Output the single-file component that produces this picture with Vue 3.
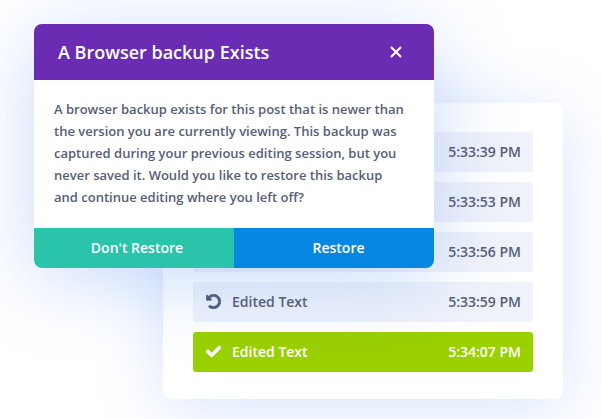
<script setup>
const rows = [
  { time: '5:33:39 PM' },
  { time: '5:33:53 PM' },
  { time: '5:33:56 PM' },
  { time: '5:33:59 PM', label: 'Edited Text', icon: 'undo' },
  { time: '5:34:07 PM', label: 'Edited Text', icon: 'check', active: true },
]
</script>

<template>
  <div class="stage">
    <section class="panel">
      <div v-for="r in rows" :key="r.time" class="row" :class="{ active: r.active }">
        <svg v-if="r.icon === 'undo'" class="ico" viewBox="0 0 512 512" width="15" height="15">
          <path fill="#4f5b70" stroke="#4f5b70" stroke-width="22" d="M255.545 8c-66.269.119-126.438 26.233-170.86 68.685L48.971 40.971C33.851 25.851 8 36.559 8 57.941V192c0 13.255 10.745 24 24 24h134.059c21.382 0 32.09-25.851 16.971-40.971l-41.75-41.75c30.864-28.899 70.801-44.907 113.23-45.273 92.398-.798 170.283 73.977 169.484 169.442C423.236 348.009 349.816 424 256 424c-41.127 0-79.997-14.678-110.63-41.556-4.743-4.161-11.906-3.908-16.368.553L89.34 422.659c-4.872 4.872-4.631 12.815.482 17.433C133.798 479.813 192.074 504 256 504c136.966 0 247.999-111.033 248-247.998C504.001 119.193 392.354 7.755 255.545 8z" />
        </svg>
        <svg v-else-if="r.icon === 'check'" class="ico" viewBox="0 0 512 512" width="15" height="15">
          <path fill="#fff" stroke="#fff" stroke-width="30" d="M173.898 439.404l-166.4-166.4c-9.997-9.997-9.997-26.206 0-36.204l36.203-36.204c9.997-10.001 26.207-10.001 36.204 0L192 312.69 432.095 72.596c9.997-9.997 26.207-9.997 36.204 0l36.203 36.204c9.997 9.997 9.997 26.206 0 36.204l-294.4 294.401c-9.998 9.997-26.207 9.997-36.204-.001z" />
        </svg>
        <span v-if="r.label" class="label">{{ r.label }}</span>
        <span class="time">{{ r.time }}</span>
      </div>
    </section>

    <section class="modal">
      <header class="head">
        <h1>A Browser backup Exists</h1>
        <svg class="close" viewBox="0 0 12 12" width="12" height="12">
          <path d="M1 1 L11 11 M11 1 L1 11" stroke="#fff" stroke-width="2.1" fill="none" />
        </svg>
      </header>
      <p class="body">A browser backup exists for this post that is newer than the version you are currently viewing. This backup was captured during your previous editing session, but you never saved it. Would you like to restore this backup and continue editing where you left off?</p>
      <footer class="foot">
        <button class="btn teal">Don't Restore</button>
        <button class="btn blue">Restore</button>
      </footer>
    </section>
  </div>
</template>

<style>
html, body { margin: 0; background: #fff; }
</style>

<style scoped>
.stage {
  position: relative;
  width: 602px;
  height: 419px;
  overflow: hidden;
  background: #fff;
  font-family: "Open Sans", sans-serif;
  padding: 103px 39px 20px 163px;
  box-sizing: border-box;
}
.panel {
  width: 400px;
  height: 296px;
  box-sizing: border-box;
  padding: 29px 30px 27px;
  display: flex;
  flex-direction: column;
  gap: 10px;
  background: #fff;
  border-radius: 8px;
  box-shadow: 0 10px 70px rgba(55, 120, 245, 0.2);
}
.row {
  height: 40px;
  box-sizing: border-box;
  flex: none;
  display: flex;
  align-items: center;
  padding: 0 12px 2px 13px;
  border-radius: 3px;
  background: #f0f3fa;
  color: #556076;
  font-size: 14px;
  font-weight: 600;
}
.row.active { background: #9bd000; color: #fff; }
.ico { flex: none; margin-right: 11px; }
.time { margin-left: auto; }
.modal {
  position: absolute;
  left: 34px;
  top: 24px;
  width: 400px;
  height: 244px;
  display: flex;
  flex-direction: column;
  background: #fff;
  border-radius: 8px;
  overflow: hidden;
  box-shadow: 0 12px 80px rgba(45, 115, 245, 0.25);
}
.head {
  height: 56px;
  flex: none;
  display: flex;
  align-items: center;
  justify-content: space-between;
  padding: 0 32px 0 24px;
  background: #6a2cb2;
  color: #fff;
}
h1 {
  margin: 0;
  font-size: 18px;
  font-weight: 600;
}
.body {
  flex: 1;
  margin: 0;
  padding: 18px 28px 0 20px;
  font-size: 13px;
  font-weight: 600;
  line-height: 22px;
  color: #556076;
}
.foot { display: flex; height: 40px; flex: none; }
.btn {
  border: 0;
  padding: 0 0 2px 6px;
  color: #fff;
  font: 600 14px "Open Sans", sans-serif;
}
.teal { width: 200px; background: #29c4a9; }
.blue { width: 200px; padding-left: 9px; background: #0887e2; }
</style>
